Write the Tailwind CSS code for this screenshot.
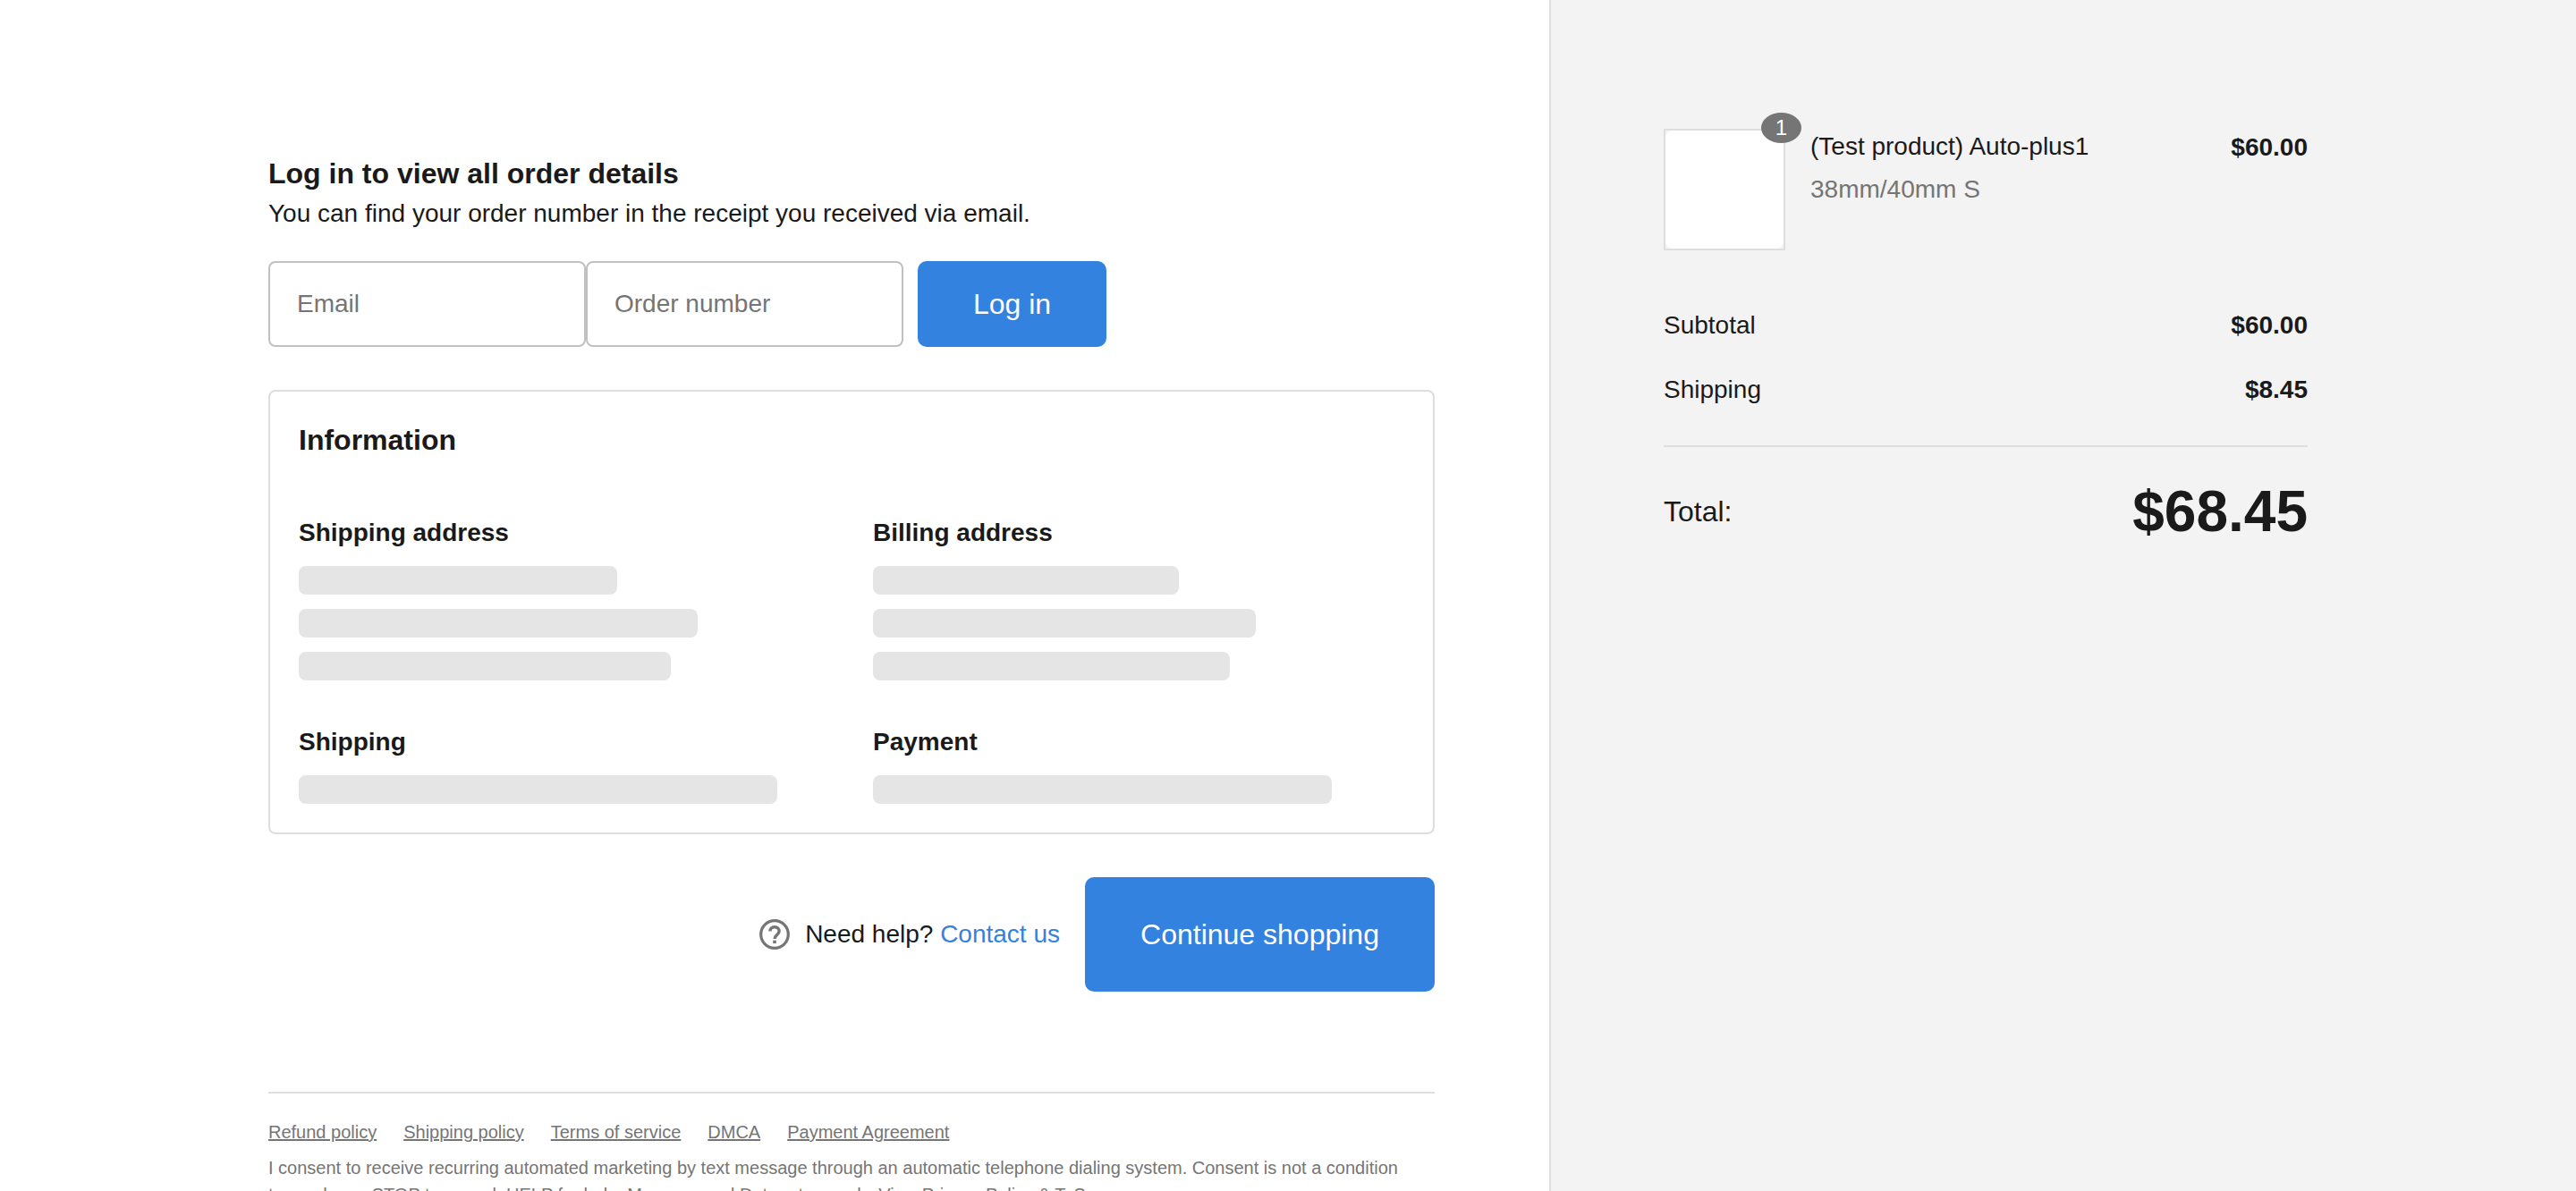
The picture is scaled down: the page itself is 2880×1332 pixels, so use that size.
<!DOCTYPE html>
<html lang="en">
<head>
<meta charset="utf-8">
<meta name="viewport" content="width=device-width, initial-scale=1">
<title>Order details</title>
<script src="https://cdn.jsdelivr.net/npm/@tailwindcss/browser@4"></script>
</head>
<body class="bg-white font-['Liberation_Sans',Arial,sans-serif] text-[28px] leading-[42px] text-[#1a1a1a]">
<div class="grid min-h-screen grid-cols-[minmax(0,1732fr)_minmax(0,1148fr)]">
  <div class="flex flex-col pt-[170px] pr-32 pl-[300px]">
    <main>
      <h1 class="text-[32px] leading-[48px] font-bold">Log in to view all order details</h1>
      <p>You can find your order number in the receipt you received via email.</p>

      <form class="mt-8 flex">
        <input id="email" type="email" aria-label="Email" placeholder="Email" class="h-24 w-[355px] rounded-lg border-2 border-[#c0c0c0] bg-white px-[30px] placeholder:text-[#757575]">
        <input id="order" type="text" aria-label="Order number" placeholder="Order number" class="h-24 w-[355px] rounded-lg border-2 border-[#c0c0c0] bg-white px-[30px] placeholder:text-[#757575]">
        <button type="submit" class="ml-4 h-24 w-[211px] rounded-[10px] bg-[#3382df] text-[32px] text-white">Log in</button>
      </form>

      <section class="mt-12 rounded-lg border-2 border-[#dedede] p-8">
        <h2 class="mb-[61px] text-[32px] leading-[44px] font-bold">Information</h2>
        <div class="grid grid-cols-[594fr_570fr] gap-12 pr-6">
          <div class="flex flex-col gap-4">
            <h3 class="font-bold">Shipping address</h3>
            <div class="h-8 w-[60%] rounded-lg bg-[#e5e5e5]"></div>
            <div class="h-8 w-[75%] rounded-lg bg-[#e5e5e5]"></div>
            <div class="h-8 w-[70%] rounded-lg bg-[#e5e5e5]"></div>
          </div>
          <div class="flex flex-col gap-4">
            <h3 class="font-bold">Billing address</h3>
            <div class="h-8 w-[60%] rounded-lg bg-[#e5e5e5]"></div>
            <div class="h-8 w-[75%] rounded-lg bg-[#e5e5e5]"></div>
            <div class="h-8 w-[70%] rounded-lg bg-[#e5e5e5]"></div>
          </div>
          <div class="flex flex-col gap-4">
            <h3 class="font-bold">Shipping</h3>
            <div class="h-8 w-[90%] rounded-lg bg-[#e5e5e5]"></div>
          </div>
          <div class="flex flex-col gap-4">
            <h3 class="font-bold">Payment</h3>
            <div class="h-8 w-[90%] rounded-lg bg-[#e5e5e5]"></div>
          </div>
        </div>
      </section>

      <div class="mt-12 flex items-center justify-end">
        <svg class="mr-[17px] size-[34px] text-[#757575]" viewBox="0 0 34 34" fill="none" stroke="currentColor" aria-hidden="true">
          <circle cx="17" cy="17" r="15.3" stroke-width="3.2"/>
          <path d="M11.9 13.6C11.9 10.5 14.1 8.7 17 8.7s5.1 1.9 5.1 4.7c0 3.9-5 4.2-5 8.6" stroke-width="3.4"/>
          <path d="M17 23.7v3.4" stroke-width="3.6"/>
        </svg>
        <p>Need help? <a href="#" class="text-[#3382df]">Contact us</a></p>
        <button type="button" class="ml-7 h-32 w-[391px] rounded-[10px] bg-[#3382df] text-[32px] text-white">Continue shopping</button>
      </div>
    </main>

    <footer class="mt-28 border-t-2 border-[#dedede] pt-7 text-[20px] leading-[30px] text-[#757575]">
      <nav class="flex flex-wrap gap-x-[30px]">
        <a href="#" class="underline decoration-2">Refund policy</a>
        <a href="#" class="underline decoration-2">Shipping policy</a>
        <a href="#" class="underline decoration-2">Terms of service</a>
        <a href="#" class="underline decoration-2">DMCA</a>
        <a href="#" class="underline decoration-2">Payment Agreement</a>
      </nav>
      <p class="mt-[10px] pr-8">I consent to receive recurring automated marketing by text message through an automatic telephone dialing system. Consent is not a condition to purchase. STOP to cancel, HELP for help. Message and Data rates apply. View Privacy Policy &amp; ToS.</p>
    </footer>
  </div>

  <aside class="border-l-2 border-[#dedede] bg-[#f3f3f3] pt-36 pr-[300px] pl-[126px]">
    <div class="flex items-start">
      <div class="relative size-[136px] shrink-0 border-2 border-[#dedede]">
        <div class="size-full rounded-lg bg-white"></div>
        <span class="absolute -top-5 -right-5 flex h-[34px] w-[45px] items-center justify-center rounded-[50%] bg-[#757575] text-[24px] text-white">1</span>
      </div>
      <div class="ml-7 flex-1 leading-10">
        <p>(Test product) Auto-plus1</p>
        <p class="mt-2 text-[#757575]">38mm/40mm S</p>
      </div>
      <p class="font-bold">$60.00</p>
    </div>
    <dl class="mt-[63px]">
      <div class="flex justify-between">
        <dt>Subtotal</dt>
        <dd class="font-bold">$60.00</dd>
      </div>
      <div class="mt-[30px] flex justify-between">
        <dt>Shipping</dt>
        <dd class="font-bold">$8.45</dd>
      </div>
      <div class="mt-[41px] flex items-center justify-between border-t-2 border-[#dedede] pt-9">
        <dt class="text-[32px] leading-[48px]">Total:</dt>
        <dd class="text-[64px] leading-[72px] font-bold">$68.45</dd>
      </div>
    </dl>
  </aside>
</div>
</body>
</html>
